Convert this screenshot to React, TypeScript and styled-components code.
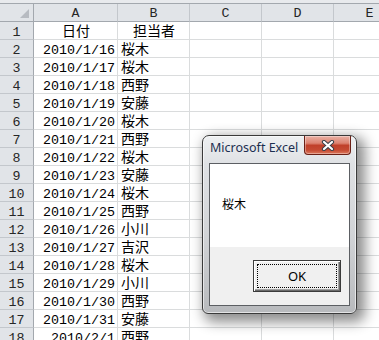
import React from "react";
import styled, { createGlobalStyle } from "styled-components";

const GlobalStyle = createGlobalStyle`
  * { box-sizing: border-box; }
  html, body { margin: 0; padding: 0; background: #fff; }
  body { width: 379px; height: 340px; overflow: hidden; }
`;

const Screen = styled.div`
  position: relative;
  width: 379px;
  height: 340px;
  overflow: hidden;
  background: #fff;
`;

const TopStrip = styled.div`
  height: 4px;
  background: #e8eaed;
  border-bottom: 1px solid #a3a8ae;
`;

const Sheet = styled.div`
  display: grid;
  grid-template-columns: 34px 84px 72px 72px 72px 72px;
  grid-auto-rows: 18px;
  width: 406px;
`;

const Corner = styled.div`
  background: #e1e4e8;
  border-right: 1px solid #a3a8ae;
  border-bottom: 1px solid #a3a8ae;
  display: flex;
  align-items: flex-end;
  justify-content: flex-end;
  padding: 0 4px 3px 0;
`;

const ColHead = styled.div`
  background: #e1e4e8;
  border-right: 1px solid #c3c7cc;
  border-bottom: 1px solid #a3a8ae;
  display: flex;
  align-items: center;
  justify-content: center;
  font-family: "Liberation Mono", monospace;
  font-size: 13.33px;
  color: #262626;
  padding-top: 1px;
`;

const RowHead = styled.div`
  background: #e1e4e8;
  border-right: 1px solid #a3a8ae;
  border-bottom: 1px solid #c3c7cc;
  display: flex;
  align-items: flex-end;
  justify-content: center;
  font-family: "Liberation Mono", monospace;
  font-size: 13.33px;
  line-height: 12px;
  color: #262626;
`;

type Kind = "date" | "name" | "head" | "empty";

const Cell = styled.div<{ $kind: Kind }>`
  border-right: 1px solid #dadcdd;
  border-bottom: 1px solid #dadcdd;
  display: flex;
  align-items: flex-end;
  justify-content: ${(p) =>
    p.$kind === "date" ? "flex-end" : p.$kind === "head" ? "center" : "flex-start"};
  padding: 0 2px 0 3px;
  font-family: ${(p) =>
    p.$kind === "date"
      ? `"Liberation Mono", monospace`
      : `"Noto Sans CJK JP", sans-serif`};
  font-size: ${(p) => (p.$kind === "date" ? "13.33px" : "14px")};
  line-height: ${(p) => (p.$kind === "date" ? "12px" : "17px")};
  color: #000;
  white-space: nowrap;
`;

const Dialog = styled.div`
  position: absolute;
  left: 202px;
  top: 135px;
  width: 155px;
  height: 179px;
  display: flex;
  flex-direction: column;
  padding: 0 6px 7px;
  border: 1px solid #3a3a3a;
  border-radius: 7px 7px 6px 6px;
  background: linear-gradient(
    to bottom,
    #eef0f2 0%,
    #dfe1e4 16%,
    #d2d4d7 55%,
    #b8babd 100%
  );
  box-shadow: inset 0 0 0 1px rgba(255, 255, 255, 0.6),
    5px 5px 13px 3px rgba(0, 0, 0, 0.45);
`;

const TitleBar = styled.div`
  height: 27px;
  display: flex;
  align-items: flex-start;
  justify-content: space-between;
  margin-right: -1px;
  padding-left: 1px;
`;

const Title = styled.span`
  font-family: "Noto Sans", sans-serif;
  font-size: 12.5px;
  line-height: 16px;
  padding-top: 4px;
  color: #1c2f50;
`;

const CloseButton = styled.div`
  width: 47px;
  height: 19px;
  border: 1px solid #6b2016;
  border-top: none;
  border-radius: 0 0 4px 4px;
  background: linear-gradient(
    to bottom,
    #e9b1a5 0%,
    #dc8270 40%,
    #c0402a 52%,
    #c54a32 78%,
    #de7a5e 100%
  );
  box-shadow: inset 0 0 0 1px rgba(255, 255, 255, 0.35);
  display: flex;
  align-items: center;
  justify-content: center;
`;

const Client = styled.div`
  flex: 1;
  display: flex;
  flex-direction: column;
  border: 1px solid #5c5f63;
  background: #fff;
`;

const Message = styled.div`
  height: 83px;
  padding: 33px 0 0 12px;
  font-family: "Noto Sans CJK JP", sans-serif;
  font-size: 12px;
  line-height: 14px;
  color: #000;
`;

const Footer = styled.div`
  flex: 1;
  background: #f0f0f0;
  display: flex;
  align-items: center;
  justify-content: flex-end;
  padding-right: 8px;
`;

const OkButton = styled.button`
  width: 88px;
  height: 32px;
  margin: 0;
  padding: 0;
  border: 1px solid #3b3b3b;
  background: #f0f0f0;
  box-shadow: inset 1px 1px 0 #ffffff, inset -1px -1px 0 #6a6a6a,
    inset -2px -2px 0 #a0a0a0;
  outline: 1px dotted #000;
  outline-offset: -5px;
  font-family: "Noto Sans", sans-serif;
  font-size: 13px;
  color: #000;
`;

const rows: [string, string][] = [
  ["2010/1/16", "桜木"],
  ["2010/1/17", "桜木"],
  ["2010/1/18", "西野"],
  ["2010/1/19", "安藤"],
  ["2010/1/20", "桜木"],
  ["2010/1/21", "西野"],
  ["2010/1/22", "桜木"],
  ["2010/1/23", "安藤"],
  ["2010/1/24", "桜木"],
  ["2010/1/25", "西野"],
  ["2010/1/26", "小川"],
  ["2010/1/27", "吉沢"],
  ["2010/1/28", "桜木"],
  ["2010/1/29", "小川"],
  ["2010/1/30", "西野"],
  ["2010/1/31", "安藤"],
  ["2010/2/1", "西野"],
];

const cols = ["A", "B", "C", "D", "E"];

export default function App() {
  return (
    <Screen>
      <GlobalStyle />
      <TopStrip />
      <Sheet>
        <Corner>
          <svg width="9" height="9" viewBox="0 0 9 9">
            <polygon points="9,0 9,9 0,9" fill="#b7bbc1" />
          </svg>
        </Corner>
        {cols.map((c) => (
          <ColHead key={c}>{c}</ColHead>
        ))}
        <RowHead>1</RowHead>
        <Cell $kind="head">日付</Cell>
        <Cell $kind="head">担当者</Cell>
        <Cell $kind="empty" />
        <Cell $kind="empty" />
        <Cell $kind="empty" />
        {rows.map(([d, n], i) => (
          <React.Fragment key={i}>
            <RowHead>{i + 2}</RowHead>
            <Cell $kind="date">{d}</Cell>
            <Cell $kind="name">{n}</Cell>
            <Cell $kind="empty" />
            <Cell $kind="empty" />
            <Cell $kind="empty" />
          </React.Fragment>
        ))}
      </Sheet>
      <Dialog>
        <TitleBar>
          <Title>Microsoft Excel</Title>
          <CloseButton>
            <svg width="14" height="11" viewBox="0 0 14 11">
              <path d="M3 2 L11 9 M11 2 L3 9" stroke="#3a3f48" strokeWidth="4.2" strokeLinecap="round" />
              <path d="M3 2 L11 9 M11 2 L3 9" stroke="#ffffff" strokeWidth="2.2" strokeLinecap="round" />
            </svg>
          </CloseButton>
        </TitleBar>
        <Client>
          <Message>桜木</Message>
          <Footer>
            <OkButton>OK</OkButton>
          </Footer>
        </Client>
      </Dialog>
    </Screen>
  );
}
